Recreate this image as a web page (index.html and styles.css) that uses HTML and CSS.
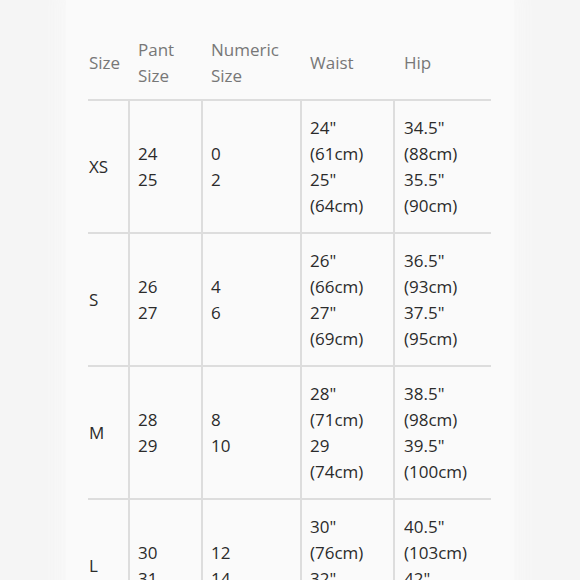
FILE: index.html
```html
<!DOCTYPE html>
<html lang="en">
<head>
<meta charset="utf-8">
<title>Size Chart</title>
<link rel="stylesheet" href="styles.css">
</head>
<body>
<div class="card">
  <div class="chart">
    <div class="row head">
      <div class="cell">Size</div>
      <div class="cell">Pant<br>Size</div>
      <div class="cell">Numeric<br>Size</div>
      <div class="cell">Waist</div>
      <div class="cell">Hip</div>
    </div>
    <div class="row">
      <div class="cell">XS</div>
      <div class="cell">24<br>25</div>
      <div class="cell">0<br>2</div>
      <div class="cell">24"<br>(61cm)<br>25"<br>(64cm)</div>
      <div class="cell">34.5"<br>(88cm)<br>35.5"<br>(90cm)</div>
    </div>
    <div class="row">
      <div class="cell">S</div>
      <div class="cell">26<br>27</div>
      <div class="cell">4<br>6</div>
      <div class="cell">26"<br>(66cm)<br>27"<br>(69cm)</div>
      <div class="cell">36.5"<br>(93cm)<br>37.5"<br>(95cm)</div>
    </div>
    <div class="row">
      <div class="cell">M</div>
      <div class="cell">28<br>29</div>
      <div class="cell">8<br>10</div>
      <div class="cell">28"<br>(71cm)<br>29<br>(74cm)</div>
      <div class="cell">38.5"<br>(98cm)<br>39.5"<br>(100cm)</div>
    </div>
    <div class="row">
      <div class="cell">L</div>
      <div class="cell">30<br>31</div>
      <div class="cell">12<br>14</div>
      <div class="cell">30"<br>(76cm)<br>32"<br>(81cm)</div>
      <div class="cell">40.5"<br>(103cm)<br>42"<br>(107cm)</div>
    </div>
  </div>
</div>
</body>
</html>
```

FILE: styles.css
```css
html, body {
  margin: 0;
  padding: 0;
  height: 100%;
  overflow: hidden;
}

body {
  background: #f5f5f5;
  font-family: "Open Sans", "Liberation Sans", sans-serif;
  font-size: 17px;
  line-height: 26px;
  color: #2b2b2b;
}

.card {
  width: 448px;
  margin: 0 auto;
  min-height: 100%;
  box-sizing: border-box;
  padding: 37px 23px 0 22px;
  background: #fafafa;
  box-shadow: 0 0 14px 8px #f8f8f8;
}

.chart {
  width: 403px;
}

.row {
  display: grid;
  grid-template-columns: 40px 73px 99px 93px 98px;
  align-items: stretch;
  border-top: 2px solid #dddddd;
}

.row.head {
  border-top: none;
  color: #777777;
}

.cell {
  display: flex;
  flex-direction: column;
  justify-content: center;
  padding: 14px 0 13px 8px;
  border-left: 2px solid #dddddd;
}

.cell:first-child {
  border-left: none;
  padding-left: 1px;
}

.cell:last-child {
  padding-left: 9px;
}

.head .cell {
  padding-top: 0;
  padding-bottom: 10px;
  border-left-color: transparent;
}
```
